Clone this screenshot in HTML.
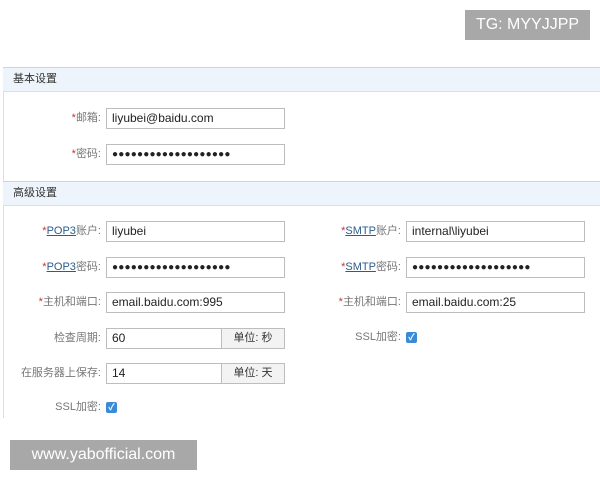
<!DOCTYPE html>
<html><head><meta charset="utf-8"><style>
*{margin:0;padding:0;box-sizing:border-box}
body{width:600px;height:480px;background:#fff;position:relative;overflow:hidden;font-family:"Liberation Sans","Noto Sans CJK SC",sans-serif}
.a{position:absolute}
.hd{position:absolute;left:3px;width:597px;height:25px;background:#eef4fb;border-top:1px solid #c8d5e2;border-bottom:1px solid #d6e0ea;font-size:11px;color:#333;line-height:23px;padding-left:10px}
.lb{position:absolute;width:200px;text-align:right;font-size:11px;color:#777;line-height:21px}
.lb i{font-style:normal;color:#c33}
.lb u{color:#2a5d8f}
.in{position:absolute;width:179px;height:21px;border:1px solid #bdbdbd;background:#fff;font-size:12px;color:#222;line-height:19px;padding-left:5px}
.pw{font-size:10px;letter-spacing:0.2px}
.un{position:absolute;right:0;top:0;width:63px;height:19px;background:#f3f3f3;border-left:1px solid #bdbdbd;font-size:11px;text-align:center;color:#333}
.cb{position:absolute;width:11px;height:11px;background:#3b8ad6;border-radius:2px;color:#fff;font-size:9px;line-height:11px;text-align:center;font-weight:bold}
.wm{position:absolute;background:#a8a8a8;color:#fff;font-size:16px;text-align:center;line-height:30px}
</style></head><body>
<div class="a" style="left:3px;top:67px;width:1px;height:351px;background:#d6e0ea"></div>
<div class="hd" style="top:67px">基本设置</div>
<div class="lb" style="left:-99px;top:108px"><i>*</i>邮箱:</div>
<div class="in" style="left:106px;top:108px">liyubei@baidu.com</div>
<div class="lb" style="left:-99px;top:144px"><i>*</i>密码:</div>
<div class="in pw" style="left:106px;top:144px">●●●●●●●●●●●●●●●●●●●</div>
<div class="hd" style="top:181px">高级设置</div>

<div class="lb" style="left:-99px;top:221px"><i>*</i><u>POP3</u>账户:</div>
<div class="in" style="left:106px;top:221px">liyubei</div>
<div class="lb" style="left:-99px;top:257px"><i>*</i><u>POP3</u>密码:</div>
<div class="in pw" style="left:106px;top:257px">●●●●●●●●●●●●●●●●●●●</div>
<div class="lb" style="left:-99px;top:292px"><i>*</i>主机和端口:</div>
<div class="in" style="left:106px;top:292px">email.baidu.com:995</div>
<div class="lb" style="left:-99px;top:328px">检查周期:</div>
<div class="in" style="left:106px;top:328px">60<div class="un">单位: 秒</div></div>
<div class="lb" style="left:-99px;top:363px">在服务器上保存:</div>
<div class="in" style="left:106px;top:363px">14<div class="un">单位: 天</div></div>
<div class="lb" style="left:-99px;top:397px">SSL加密:</div>
<div class="cb" style="left:106px;top:402px">✓</div>

<div class="lb" style="left:201px;top:221px"><i>*</i><u>SMTP</u>账户:</div>
<div class="in" style="left:406px;top:221px">internal\liyubei</div>
<div class="lb" style="left:201px;top:257px"><i>*</i><u>SMTP</u>密码:</div>
<div class="in pw" style="left:406px;top:257px">●●●●●●●●●●●●●●●●●●●</div>
<div class="lb" style="left:201px;top:292px"><i>*</i>主机和端口:</div>
<div class="in" style="left:406px;top:292px">email.baidu.com:25</div>
<div class="lb" style="left:201px;top:327px">SSL加密:</div>
<div class="cb" style="left:406px;top:332px">✓</div>

<div class="wm" style="left:465px;top:10px;width:125px;height:30px">TG: MYYJJPP</div>
<div class="wm" style="left:10px;top:440px;width:187px;height:30px">www.yabofficial.com</div>
</body></html>
